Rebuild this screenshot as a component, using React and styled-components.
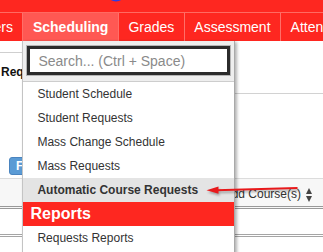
import styled, { createGlobalStyle } from 'styled-components';

const menuItems = [
  'Student Schedule',
  'Student Requests',
  'Mass Change Schedule',
  'Mass Requests',
];

function App() {
  return (
    <Page>
      <GlobalStyle />
      <Banner>
        <Logo width="20" height="20" viewBox="0 0 20 20">
          <circle cx="10" cy="10" r="9.5" fill="#2d3ce6" />
        </Logo>
      </Banner>
      <Nav>
        <NavItem>Teachers</NavItem>
        <NavItem $active>
          Scheduling
          <Dropdown>
            <SearchArea>
              <SearchInput placeholder="Search... (Ctrl + Space)" readOnly />
            </SearchArea>
            {menuItems.map(label => (
              <MenuItem key={label}>{label}</MenuItem>
            ))}
            <MenuItem $active>Automatic Course Requests</MenuItem>
            <MenuHeader>Reports</MenuHeader>
            <MenuItem>Requests Reports</MenuItem>
          </Dropdown>
        </NavItem>
        <NavItem>Grades</NavItem>
        <NavItem>Assessment</NavItem>
        <NavItem>Attendance</NavItem>
      </Nav>

      <TopArea>
        <LeftPane>
          <Strip />
          <Title>Requests</Title>
          <BlueButton>Filter</BlueButton>
        </LeftPane>
        <RightPane />
      </TopArea>

      <Table>
        <HeaderRow>
          <HeaderCell>
            Add Course(s)
            <SortIcon width="6" height="14" viewBox="0 0 6 14">
              <polygon points="0,6 3,0 6,6" fill="#444" />
              <polygon points="0,8 6,8 3,14" fill="#444" />
            </SortIcon>
          </HeaderCell>
        </HeaderRow>
        <Row />
        <Row />
      </Table>

      <Pointer width="105" height="20" viewBox="0 0 105 20">
        <line x1="97.5" y1="8" x2="16" y2="10.2" stroke="#e8191b" strokeWidth="2" />
        <polygon points="6.5,10.2 18.5,6.5 18.5,13.8" fill="#e8191b" />
      </Pointer>
    </Page>
  );
}

const GlobalStyle = createGlobalStyle`
  *, *::before, *::after { box-sizing: border-box; }
  html, body { margin: 0; padding: 0; background: #fff; }
  body {
    font-family: "Liberation Sans", Arial, sans-serif;
    overflow: hidden;
  }
`;

const Page = styled.div`
  position: relative;
  width: 323px;
  height: 252px;
  overflow: hidden;
  background: #fff;
`;

const Banner = styled.header`
  height: 12px;
  background: #fe2720;
  display: flex;
  align-items: flex-end;
  padding-left: 106px;
  overflow: hidden;
`;

const Logo = styled.svg`
  display: block;
  flex: none;
  margin-bottom: 10px;
`;

const Nav = styled.nav`
  display: flex;
  height: 29px;
  margin-left: -54.4px;
  background: #fe2720;
  border-top: 1px solid #ff6a62;
  position: relative;
  z-index: 5;
`;

const NavItem = styled.div`
  position: relative;
  display: flex;
  align-items: center;
  flex: none;
  padding: 0 9.5px;
  border-left: 1px solid #ff6f68;
  color: #fff;
  font-size: 14px;
  font-weight: ${p => (p.$active ? 700 : 400)};
  background: ${p => (p.$active ? '#ff5853' : 'transparent')};
  white-space: nowrap;
`;

const Dropdown = styled.div`
  position: absolute;
  top: 100%;
  left: -1px;
  width: 213px;
  height: 230px;
  background: #fff;
  border-left: 1px solid #c4c4c4;
  border-right: 1px solid #a9a9a9;
  box-shadow: 2px 1px 3px rgba(0, 0, 0, 0.3);
  font-weight: 400;
  color: #333;
  z-index: 10;
`;

const SearchArea = styled.div`
  background: #eee;
  padding: 5px 4px 6px;
  border-bottom: 1px solid #cdcdcd;
`;

const SearchInput = styled.input`
  display: block;
  width: 100%;
  height: 29px;
  padding: 0 0 0 8px;
  border: 3px solid #2b2b2b;
  box-shadow: 0 0 0 1px #b5b5b5;
  background: #fff;
  font-family: inherit;
  font-size: 14px;
  outline: none;
  &::placeholder {
    color: #8a8a8a;
  }
`;

const MenuItem = styled.div`
  height: 24px;
  display: flex;
  align-items: center;
  padding-left: 14px;
  font-size: 12px;
  color: #333;
  font-weight: ${p => (p.$active ? 700 : 400)};
  background: ${p => (p.$active ? '#e4e4e4' : '#fff')};
`;

const MenuHeader = styled.div`
  height: 24px;
  display: flex;
  align-items: center;
  padding-left: 7px;
  background: #fe2720;
  color: #fff;
  font-size: 16px;
  font-weight: 700;
`;

const TopArea = styled.div`
  display: grid;
  grid-template-columns: 150px 1fr;
  height: 137px;
`;

const LeftPane = styled.div`
  display: flex;
  flex-direction: column;
  align-items: flex-start;
`;

const Strip = styled.div`
  align-self: stretch;
  height: 12px;
  border-bottom: 1px solid #cfcfcf;
`;

const Title = styled.div`
  margin-top: 12px;
  padding-left: 1px;
  font-size: 12px;
  line-height: 14px;
  font-weight: 700;
  color: #111;
`;

const BlueButton = styled.div`
  margin-top: auto;
  margin-bottom: 3px;
  margin-left: 9px;
  height: 18px;
  display: flex;
  align-items: center;
  padding: 0 6px;
  background: #5b9bd5;
  border: 1px solid #4a84bf;
  border-radius: 3px;
  color: #fff;
  font-size: 12px;
  font-weight: 700;
`;

const RightPane = styled.div`
  height: 53px;
  border-bottom: 1px solid #d2d2d2;
`;

const Table = styled.div`
  display: flex;
  flex-direction: column;
`;

const HeaderRow = styled.div`
  height: 31px;
  display: flex;
  justify-content: flex-end;
  background: #f7f7f7;
  border-top: 1px solid #dcdcdc;
  border-bottom: 3px double #999;
`;

const HeaderCell = styled.div`
  display: flex;
  align-items: center;
  padding: 2px 11px 0 0;
  font-size: 12px;
  color: #333;
`;

const SortIcon = styled.svg`
  display: block;
  margin-left: 5px;
  margin-top: 3px;
`;

const Row = styled.div`
  height: 28px;
  border-bottom: 3px double #a5a5a5;
`;

const Pointer = styled.svg`
  position: absolute;
  left: 200px;
  top: 180px;
  z-index: 20;
  filter: drop-shadow(1px 2px 1px rgba(0, 0, 0, 0.3));
`;

export default App;
